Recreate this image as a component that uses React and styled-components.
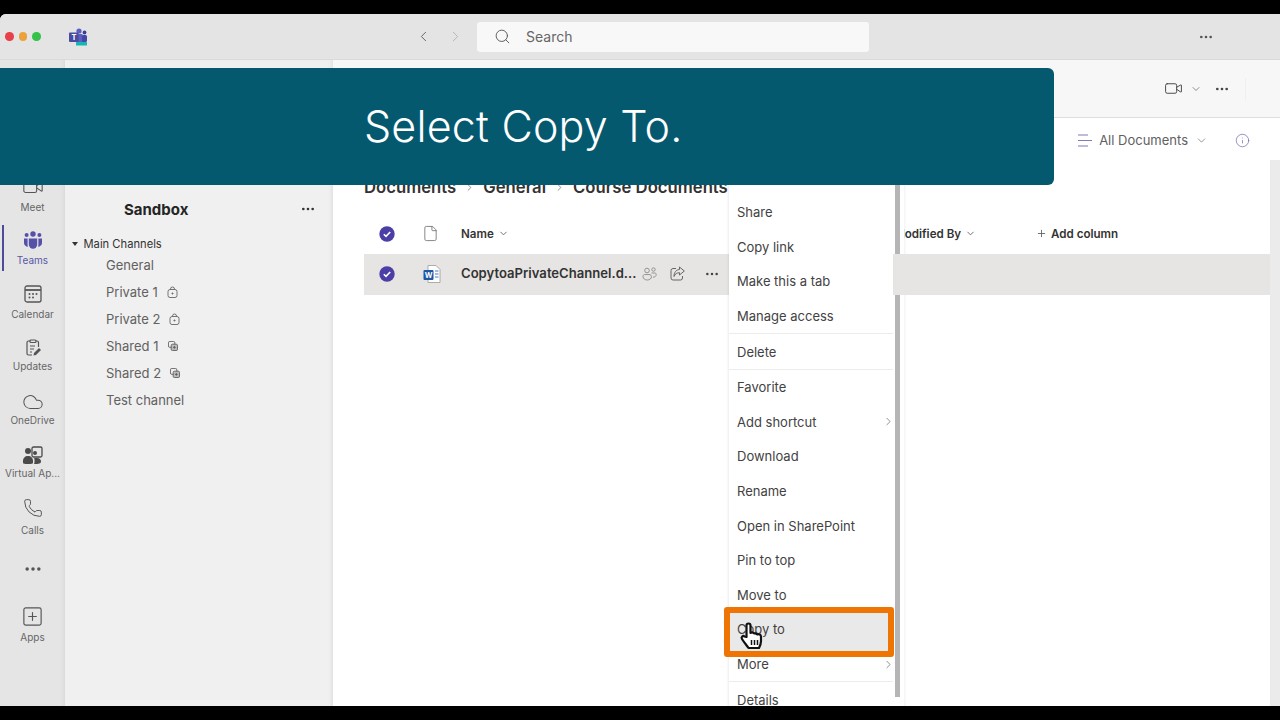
import React from "react";
import styled, { createGlobalStyle } from "styled-components";
import {
  ChevronDown,
  ChevronLeft,
  ChevronRight,
  Cloud,
  File,
  Info,
  MoreHorizontal,
  Phone,
  Plus,
  Search,
  SquarePlus,
  Video,
} from "lucide-react";

const GlobalStyle = createGlobalStyle`
  html, body { margin: 0; padding: 0; background: #000; }
  * { box-sizing: border-box; }
  body { font-family: Inter, "Liberation Sans", sans-serif; }
`;

const Page = styled.div`
  width: 1280px;
  height: 720px;
  padding: 14px 0;
  background: #000;
  overflow: hidden;
`;

const Window = styled.div`
  position: relative;
  height: 692px;
  display: flex;
  flex-direction: column;
  overflow: hidden;
  background: #fff;
  border-radius: 6px 0 0 0;
`;

const TitleBar = styled.div`
  flex: 0 0 46px;
  display: flex;
  align-items: center;
  background: #e4e4e4;
  border-bottom: 1px solid #dadada;
`;

const Lights = styled.div`
  display: flex;
  gap: 5px;
  padding-left: 5px;
  width: 68px;
`;

const Light = styled.span`
  width: 8.5px;
  height: 8.5px;
  border-radius: 50%;
  background: ${(p) => p.$color};
`;

const NavArrows = styled.div`
  margin-left: 327px;
  width: 62px;
  display: flex;
  gap: 15px;
  color: #5c5c5c;
  svg:last-child { color: #b0b0b0; }
`;

const SearchBox = styled.div`
  width: 392px;
  height: 30px;
  background: #f8f8f8;
  border-radius: 3px;
  display: flex;
  align-items: center;
  gap: 15px;
  padding-left: 17px;
  font-size: 14px;
  color: #666;
`;

const TitleMore = styled.div`
  margin-left: 329px;
  display: flex;
  color: #555;
`;

const Body = styled.div`
  flex: 1;
  display: flex;
  min-height: 0;
`;

const Rail = styled.nav`
  flex: 0 0 65px;
  background: #e5e5e5;
  padding-top: 117px;
  box-shadow: inset -5px 0 4px -4px #d6d6d6;
`;

const RailItem = styled.div`
  position: relative;
  height: ${(p) => p.$h}px;
  display: flex;
  flex-direction: column;
  align-items: center;
  font-size: 10px;
  line-height: 12px;
  white-space: nowrap;
  color: ${(p) => (p.$active ? "#5b57a6" : "#666")};
  ${(p) =>
    p.$active &&
    `&::before {
      content: "";
      position: absolute;
      left: 2px;
      top: -5px;
      height: 46px;
      width: 2px;
      background: #4f4b9b;
    }`}
`;

const RailIcon = styled.div`
  flex: none;
  height: 20px;
  display: flex;
  align-items: center;
  justify-content: center;
  margin-bottom: ${(p) => p.$gap}px;
`;

const Panel = styled.aside`
  flex: 0 0 268px;
  background: #f0f0f0;
  box-shadow: inset -4px 0 3px -2px #e2e2e2;
  padding-top: 139px;
`;

const TeamHead = styled.div`
  display: flex;
  align-items: center;
  justify-content: space-between;
  padding: 0 17px 0 59px;
  height: 20px;
  font-size: 15px;
  font-weight: 700;
  color: #242424;
  svg { color: #333; }
`;

const GroupLabel = styled.div`
  display: flex;
  align-items: center;
  gap: 5.5px;
  margin-top: 17px;
  padding-left: 7px;
  height: 15px;
  font-size: 11.2px;
  color: #333;
`;

const Caret = styled.span`
  width: 0;
  height: 0;
  border-left: 3.5px solid transparent;
  border-right: 3.5px solid transparent;
  border-top: 4.5px solid #333;
`;

const ChannelRow = styled.div`
  display: flex;
  align-items: center;
  gap: 9px;
  height: 27px;
  padding-left: 41px;
  font-size: 13px;
  color: #616161;
`;

const Main = styled.main`
  position: relative;
  flex: 1;
  min-width: 0;
  background: #fff;
  display: flex;
  flex-direction: column;
`;

const ChannelHeader = styled.div`
  flex: 0 0 58px;
  background: #f7f7f7;
  border-bottom: 1px solid #dedede;
  display: flex;
  align-items: center;
  justify-content: flex-end;
  gap: 7px;
  padding-right: 34px;
  color: #444;
`;

const HeaderMore = styled.div`
  display: flex;
  margin-left: 5px;
`;

const HeaderDivider = styled.div`
  width: 1px;
  height: 22px;
  margin-left: 8px;
  background: #efefef;
`;

const ViewBar = styled.div`
  flex: 0 0 42px;
  display: flex;
  align-items: center;
  justify-content: flex-end;
  padding: 2px 30px 0 0;
  font-size: 13px;
  color: #616161;
`;

const ViewName = styled.span`
  margin: 0 7px;
`;

const InfoWrap = styled.div`
  display: flex;
  margin-left: 27px;
  color: #7a6fb0;
`;

const Content = styled.div`
  flex: 1;
  display: flex;
  min-height: 0;
`;

const DocArea = styled.div`
  flex: 1;
  padding: 17px 0 0 31px;
  min-width: 0;
`;

const Crumbs = styled.div`
  display: flex;
  align-items: center;
  gap: 8px;
  height: 20px;
  font-size: 16.7px;
  font-weight: 600;
  color: #333;
  white-space: nowrap;
  svg { color: #888; }
`;

const ListRow = styled.div`
  position: relative;
  z-index: ${(p) => (p.$selected ? 2 : 0)};
  display: grid;
  grid-template-columns: 46px 51px 433px 142px 1fr;
  align-items: center;
  height: 41px;
  padding-bottom: ${(p) => (p.$selected ? 2 : 0)}px;
  font-size: ${(p) => (p.$head ? 11.6 : 13.1)}px;
  font-weight: 600;
  color: #333;
  background: ${(p) => (p.$selected ? "#e6e5e3" : "transparent")};
  margin-top: ${(p) => p.$mt || 0}px;
`;

const CheckCell = styled.div`
  display: flex;
  justify-content: center;
`;

const IconCell = styled.div`
  display: flex;
  padding-left: ${(p) => p.$pad}px;
  color: #666;
`;

const HeadCell = styled.div`
  display: flex;
  align-items: center;
  gap: 4px;
  white-space: nowrap;
  svg { color: #666; }
`;

const FileCell = styled.div`
  display: flex;
  align-items: center;
  white-space: nowrap;
  color: #333;
`;

const FileName = styled.span`
  width: 181px;
  padding-bottom: 2px;
`;

const RowIcons = styled.div`
  display: flex;
  align-items: center;
  gap: 13px;
  color: #8a8a8a;
  svg:last-child { color: #444; margin-left: 6px; }
`;

const PageScroll = styled.div`
  flex: 0 0 10px;
  background: #ebebeb;
`;

const MenuRail = styled.div`
  position: absolute;
  z-index: 1;
  left: 560px;
  top: 115px;
  width: 11px;
  height: 560px;
  background: #fff;
  box-shadow: 1px 0 2px rgba(0, 0, 0, 0.06);
`;

const MenuThumb = styled.div`
  width: 5px;
  height: 522px;
  margin-left: 2px;
  background: #b5b5b5;
`;

const Menu = styled.div`
  position: absolute;
  z-index: 3;
  left: 396px;
  top: 115px;
  width: 164px;
  height: 560px;
  background: #fff;
  box-shadow: -1px 0 2px rgba(0, 0, 0, 0.08);
  padding-top: 20px;
`;

const MenuItem = styled.div`
  position: relative;
  height: 34.6px;
  display: flex;
  align-items: center;
  justify-content: space-between;
  padding: 0 0 0 8px;
  font-size: 13px;
  color: #424242;
  svg { color: #555; margin-right: -2px; }
`;

const MenuLabel = styled.span`
  position: relative;
  z-index: 1;
`;

const MenuDivider = styled.div`
  height: 1px;
  background: #ececec;
`;

const Highlight = styled.div`
  position: absolute;
  top: -5px;
  bottom: -10.5px;
  left: -5px;
  right: -1px;
  border: 6px solid #ee7404;
  border-radius: 3px;
  background: #e9e9e9;
`;

const Pointer = styled.svg`
  position: absolute;
  z-index: 2;
  left: 8px;
  top: 9px;
  width: 30px;
  height: 30px;
`;

const Banner = styled.div`
  position: absolute;
  z-index: 5;
  left: 0;
  top: 54px;
  width: 1054px;
  height: 117px;
  padding: 0 0 2px 364px;
  background: #05596f;
  border-radius: 0 6px 6px 0;
  display: flex;
  align-items: center;
  font-family: Inter, "Liberation Sans", sans-serif;
  font-weight: 300;
  font-size: 43px;
  letter-spacing: 0.2px;
  color: #fff;
`;

const TeamsLogo = () => (
  <svg width="20" height="18" viewBox="0 0 20 18">
    <circle cx="11" cy="3" r="2.6" fill="#5a5fc0" />
    <circle cx="16.5" cy="4.5" r="1.9" fill="#3c3f94" />
    <rect x="9" y="6" width="6" height="9" rx="1.5" fill="#5a5fc0" />
    <rect x="14" y="7" width="5" height="7" rx="1.5" fill="#4347a8" />
    <rect x="1" y="4.5" width="9.5" height="9.5" rx="1" fill="#4a4d9e" />
    <text x="3.4" y="12" fontSize="7.5" fontWeight="700" fill="#fff" fontFamily="Inter, sans-serif">T</text>
    <rect x="8" y="14" width="11" height="3.5" rx="0.6" fill="#14b8b0" />
  </svg>
);

const TeamsIcon = () => (
  <svg width="20" height="19" viewBox="0 0 20 19" fill="#5550a8">
    <circle cx="10" cy="3" r="2.7" />
    <circle cx="3.6" cy="4" r="2" />
    <circle cx="16.4" cy="4" r="2" />
    <path d="M5.8 7.5h8.4v6a4.2 4.2 0 0 1-8.4 0z" />
    <path d="M1 7.5h3.6v6.2c0 .8.1 1.4.4 2C2.7 15.700 1 14 1 12z" />
    <path d="M19 7.5h-3.6v6.200c0 .8-.1 1.400-.4 2 2.300 0 4-1.700 4-3.700z" />
  </svg>
);

const CalendarIcon = () => (
  <svg width="18" height="18" viewBox="0 0 18 18" fill="none" stroke="#555" strokeWidth="1.3">
    <rect x="1" y="1" width="16" height="16" rx="2" />
    <path d="M1 5h16" strokeWidth="1.8" />
    <g fill="#555" stroke="none">
      <circle cx="5.5" cy="9" r="1" />
      <circle cx="9" cy="9" r="1" />
      <circle cx="12.5" cy="9" r="1" />
      <circle cx="5.5" cy="12.5" r="1" />
      <circle cx="9" cy="12.5" r="1" />
    </g>
  </svg>
);

const UpdatesIcon = () => (
  <svg width="18" height="18" viewBox="0 0 18 18" fill="none" stroke="#555" strokeWidth="1.2">
    <path d="M6 2H4.500A1.500 1.500 0 0 0 3 3.500v11A1.500 1.500 0 0 0 4.500 16H8M12 2h1a1.500 1.500 0 0 1 1.500 1.500V8" />
    <rect x="6" y="1" width="6" height="2.5" rx="1" />
    <path d="M6 7h5M6 10h4M6 13h2" />
    <path d="M9.500 16.500l.5-2.500 5-5 2 2-5 5z" fill="#555" stroke="none" />
  </svg>
);

const VirtualIcon = () => (
  <svg width="20" height="19" viewBox="0 0 20 19">
    <rect x="9" y="1" width="10" height="10" rx="1.5" fill="none" stroke="#4a4a4a" strokeWidth="1.3" />
    <circle cx="5" cy="5" r="3" fill="#4a4a4a" />
    <circle cx="12" cy="7" r="2" fill="#4a4a4a" />
    <path d="M0 15c0-3 2-5 5-5s5 2 5 5v1.500c0 1-1 1.500-5 1.500s-5-.5-5-1.500z" fill="#4a4a4a" />
    <path d="M11 18c.6-1 .8-3 .2-6H14c3 0 4 2 4 3.500 0 2-2 2.500-7 2.500z" fill="#4a4a4a" />
  </svg>
);

const LockIcon = () => (
  <svg width="11" height="12" viewBox="0 0 11 12" fill="none" stroke="#666" strokeWidth="0.9">
    <rect x="1" y="3.5" width="9" height="8" rx="2" />
    <path d="M3.500 3.500V3a2 2 0 0 1 4 0v.5" />
    <circle cx="5.5" cy="7.5" r="0.6" fill="#666" />
  </svg>
);

const SharedIcon = () => (
  <svg width="10" height="10" viewBox="0 0 11 11" fill="none" stroke="#555" strokeWidth="0.9">
    <rect x="0.5" y="0.5" width="7" height="6.5" rx="1.5" />
    <rect x="3.5" y="3.5" width="7" height="7" rx="1.5" fill="#bbb" />
    <path d="M5.500 7h3M7 5.500v3" />
  </svg>
);

const CheckBadge = () => (
  <svg width="16" height="16" viewBox="0 0 16 16">
    <circle cx="8" cy="8" r="7.7" fill="#4b3fa6" />
    <path d="M4.800 8.200l2.200 2.200 4.200-4.400" fill="none" stroke="#fff" strokeWidth="1.6" />
  </svg>
);

const WordIcon = () => (
  <svg width="18" height="18" viewBox="0 0 18 18">
    <path d="M5 .5h8l4 4v13H5z" fill="#fff" stroke="#9a9a9a" strokeWidth="0.8" />
    <path d="M12 6h3.500M12 9h3.500M12 12h3.500" stroke="#3f7fcf" strokeWidth="1" />
    <rect x="0.5" y="5" width="10" height="10" rx="1" fill="#1f57a8" />
    <text x="1.7" y="12.7" fontSize="7.5" fontWeight="700" fill="#fff" fontFamily="Inter, sans-serif">W</text>
  </svg>
);

const ListIcon = () => (
  <svg width="14" height="13" viewBox="0 0 14 13" stroke="#8379b5" strokeWidth="1.2">
    <path d="M0 1h10M0 6.500h14M0 12h10" />
  </svg>
);

const PeopleIcon = () => (
  <svg width="15" height="15" viewBox="0 0 15 15" fill="none" stroke="currentColor" strokeWidth="0.9">
    <circle cx="5" cy="4.5" r="2.3" />
    <circle cx="11.5" cy="3.5" r="1.7" />
    <path d="M1 10.500C1 9 2 8.500 3 8.500h4c1.500 0 2.500 1 2.500 2.200 0 2-2 3.300-4.300 3.300C3 14 1 12.700 1 10.500z" />
    <path d="M9.500 7h3.200c.9 0 1.500.6 1.500 1.500 0 1.700-1.400 2.700-3.200 2.700" />
  </svg>
);

const ShareBoxIcon = () => (
  <svg width="15" height="15" viewBox="0 0 15 15" fill="none" stroke="#666" strokeWidth="1">
    <path d="M6 2.500H3A2 2 0 0 0 1 4.500v7.500a2 2 0 0 0 2 2h7.500a2 2 0 0 0 2-2v-2" />
    <path d="M9.500 1l4.800 4-4.800 4V6.700C7 6.700 5 7.800 4 10.500c0-4 2-6.800 5.500-7z" />
  </svg>
);

const HandCursor = () => (
  <Pointer viewBox="0 0 27 30">
    <path
      d="M8 16V4.500a2 2 0 0 1 4 0V12l1-.5a2 2 0 0 1 2 .5l1 .5a2 2 0 0 1 2 .5l1 .5c2-.8 3.500.5 3.500 2.500v4c0 3-1 5-2 7H10c-2-3-4-5-6.500-9-1.300-2 1-3.800 2.500-2.500z"
      fill="#fff"
      stroke="#111"
      strokeWidth="2.2"
      strokeLinejoin="round"
    />
    <path d="M13 19v5M16 19v5M19 19v5" stroke="#111" strokeWidth="1.5" />
  </Pointer>
);

const railItems = [
  { label: "Meet", icon: <Video size={22} strokeWidth={1.2} color="#555" />, h: 53, gap: 4 },
  { label: "Teams", icon: <TeamsIcon />, active: true, h: 54, gap: 4 },
  { label: "Calendar", icon: <CalendarIcon />, h: 54, gap: 4 },
  { label: "Updates", icon: <UpdatesIcon />, h: 54, gap: 2 },
  { label: "OneDrive", icon: <Cloud size={22} strokeWidth={1.1} color="#555" />, h: 53, gap: 2 },
  { label: "Virtual Ap...", icon: <VirtualIcon />, h: 53, gap: 2 },
  { label: "Calls", icon: <Phone size={20} strokeWidth={1.2} color="#555" />, h: 61, gap: 6 },
  { icon: <MoreHorizontal size={20} strokeWidth={2.2} color="#555" />, h: 47, gap: 0 },
  { label: "Apps", icon: <SquarePlus size={23} strokeWidth={1.2} color="#555" />, h: 54, gap: 5 },
];

const channels = [
  { name: "General" },
  { name: "Private 1", icon: <LockIcon /> },
  { name: "Private 2", icon: <LockIcon /> },
  { name: "Shared 1", icon: <SharedIcon /> },
  { name: "Shared 2", icon: <SharedIcon /> },
  { name: "Test channel" },
];

export default function App() {
  return (
    <Page>
      <GlobalStyle />
      <Window>
        <TitleBar>
          <Lights>
            <Light $color="#e8404a" />
            <Light $color="#eda13a" />
            <Light $color="#36c24a" />
          </Lights>
          <TeamsLogo />
          <NavArrows>
            <ChevronLeft size={17} strokeWidth={1.3} />
            <ChevronRight size={17} strokeWidth={1.3} />
          </NavArrows>
          <SearchBox>
            <Search size={17} strokeWidth={1.3} color="#555" />
            Search
          </SearchBox>
          <TitleMore>
            <MoreHorizontal size={16} />
          </TitleMore>
        </TitleBar>
        <Body>
          <Rail>
            {railItems.map((item, i) => (
              <RailItem key={i} $active={item.active} $h={item.h}>
                <RailIcon $gap={item.gap}>{item.icon}</RailIcon>
                {item.label}
              </RailItem>
            ))}
          </Rail>
          <Panel>
            <TeamHead>
              Sandbox
              <MoreHorizontal size={16} />
            </TeamHead>
            <GroupLabel>
              <Caret />
              Main Channels
            </GroupLabel>
            {channels.map((c) => (
              <ChannelRow key={c.name}>
                {c.name}
                {c.icon}
              </ChannelRow>
            ))}
          </Panel>
          <Main>
            <ChannelHeader>
              <Video size={19} strokeWidth={1.2} />
              <ChevronDown size={12} strokeWidth={1.2} />
              <HeaderMore>
                <MoreHorizontal size={16} />
              </HeaderMore>
              <HeaderDivider />
            </ChannelHeader>
            <ViewBar>
              <ListIcon />
              <ViewName>All Documents</ViewName>
              <ChevronDown size={13} strokeWidth={1.2} />
              <InfoWrap>
                <Info size={15} strokeWidth={1.2} />
              </InfoWrap>
            </ViewBar>
            <Content>
              <DocArea>
                <Crumbs>
                  Documents
                  <ChevronRight size={11} />
                  General
                  <ChevronRight size={11} />
                  Course Documents
                </Crumbs>
                <ListRow $head $mt={16}>
                  <CheckCell><CheckBadge /></CheckCell>
                  <IconCell $pad={11.5}><File size={17} strokeWidth={1.1} /></IconCell>
                  <HeadCell>
                    Name <ChevronDown size={11} />
                  </HeadCell>
                  <HeadCell>
                    Modified By <ChevronDown size={11} />
                  </HeadCell>
                  <HeadCell>
                    <Plus size={11} /> Add column
                  </HeadCell>
                </ListRow>
                <ListRow $selected>
                  <CheckCell><CheckBadge /></CheckCell>
                  <IconCell $pad={13}><WordIcon /></IconCell>
                  <FileCell>
                    <FileName>CopytoaPrivateChannel.d...</FileName>
                    <RowIcons>
                      <PeopleIcon />
                      <ShareBoxIcon />
                      <MoreHorizontal size={16} strokeWidth={1.8} />
                    </RowIcons>
                  </FileCell>
                </ListRow>
              </DocArea>
              <PageScroll />
            </Content>
            <MenuRail>
              <MenuThumb />
            </MenuRail>
            <Menu>
              <MenuItem>Share</MenuItem>
              <MenuItem>Copy link</MenuItem>
              <MenuItem>Make this a tab</MenuItem>
              <MenuItem>Manage access</MenuItem>
              <MenuDivider />
              <MenuItem>Delete</MenuItem>
              <MenuDivider />
              <MenuItem>Favorite</MenuItem>
              <MenuItem>
                Add shortcut <ChevronRight size={13} strokeWidth={1.2} />
              </MenuItem>
              <MenuItem>Download</MenuItem>
              <MenuItem>Rename</MenuItem>
              <MenuItem>Open in SharePoint</MenuItem>
              <MenuItem>Pin to top</MenuItem>
              <MenuItem>Move to</MenuItem>
              <MenuItem>
                <Highlight />
                <MenuLabel>Copy to</MenuLabel>
                <HandCursor />
              </MenuItem>
              <MenuItem>
                More <ChevronRight size={13} strokeWidth={1.2} />
              </MenuItem>
              <MenuDivider />
              <MenuItem>Details</MenuItem>
            </Menu>
          </Main>
        </Body>
        <Banner>Select Copy To.</Banner>
      </Window>
    </Page>
  );
}
